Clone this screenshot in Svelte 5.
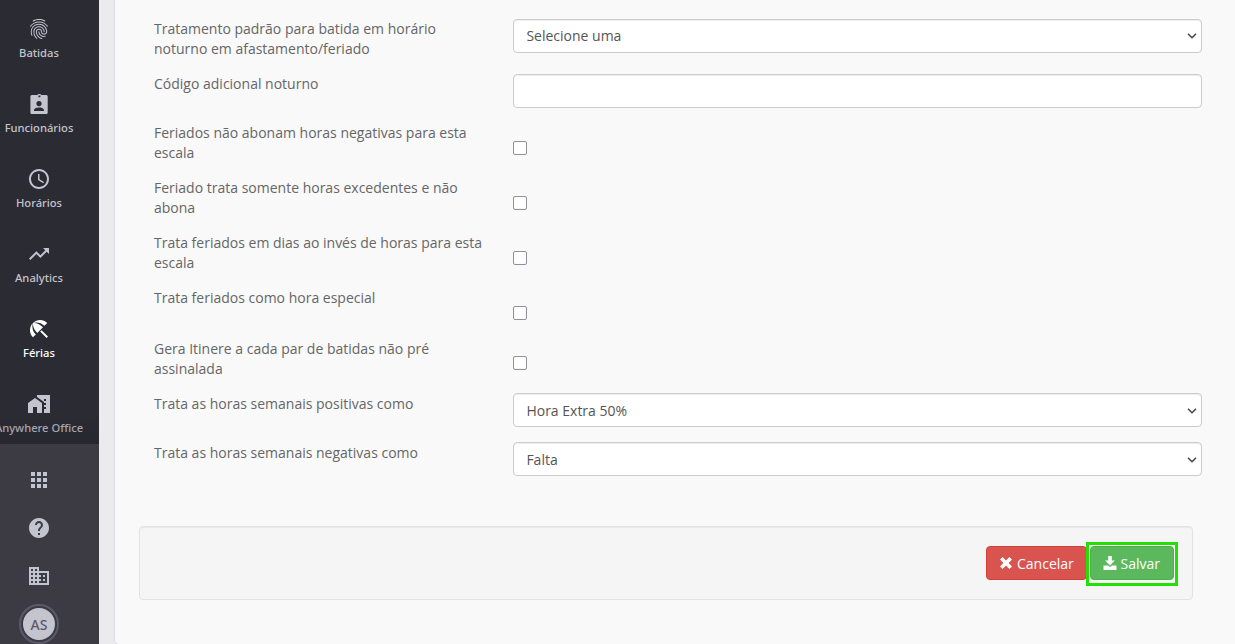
<script>
  const nav = [
    { label: 'Batidas', paths: ['M17.81 4.47c-.08 0-.16-.02-.23-.06C15.66 3.42 14 3 12.01 3c-1.98 0-3.86.47-5.57 1.41-.24.13-.54.04-.68-.2-.13-.24-.04-.55.2-.68C7.82 2.52 9.86 2 12.01 2c2.13 0 3.99.47 6.03 1.52.25.13.34.43.21.67-.09.18-.26.28-.44.28zM3.5 9.72c-.1 0-.2-.03-.29-.09-.23-.16-.28-.47-.12-.7.99-1.4 2.25-2.5 3.75-3.27C9.98 4.04 14 4.03 17.15 5.65c1.5.77 2.76 1.86 3.75 3.25.16.22.11.54-.12.7-.23.16-.54.11-.7-.12-.9-1.26-2.04-2.25-3.39-2.94-2.87-1.47-6.54-1.47-9.4.01-1.36.7-2.5 1.7-3.4 2.96-.08.14-.23.21-.39.21zm6.25 12.07c-.13 0-.26-.05-.35-.15-.87-.87-1.34-1.43-2.01-2.64-.69-1.23-1.05-2.73-1.05-4.34 0-2.97 2.54-5.39 5.66-5.39s5.66 2.42 5.66 5.39c0 .28-.22.5-.5.5s-.5-.22-.5-.5c0-2.42-2.09-4.39-4.66-4.39-2.57 0-4.66 1.97-4.66 4.39 0 1.44.32 2.77.93 3.85.64 1.15 1.08 1.64 1.85 2.42.19.2.19.51 0 .71-.11.1-.24.15-.37.15zm7.17-1.85c-1.19 0-2.24-.3-3.1-.89-1.49-1.01-2.38-2.65-2.38-4.39 0-.28.22-.5.5-.5s.5.22.5.5c0 1.41.72 2.74 1.94 3.56.71.48 1.54.71 2.54.71.24 0 .64-.03 1.04-.1.27-.05.53.13.58.41.05.27-.13.53-.41.58-.57.11-1.07.12-1.21.12zM14.91 22c-.04 0-.09-.01-.13-.02-1.59-.44-2.63-1.03-3.72-2.1-1.4-1.39-2.17-3.24-2.17-5.22 0-1.62 1.38-2.94 3.08-2.94 1.7 0 3.08 1.32 3.08 2.94 0 1.07.93 1.94 2.08 1.94s2.08-.87 2.08-1.94c0-3.77-3.25-6.83-7.25-6.83-2.84 0-5.44 1.58-6.61 4.03-.39.81-.59 1.76-.59 2.8 0 .78.07 2.01.67 3.61.1.26-.03.55-.29.64-.26.1-.55-.04-.64-.29-.49-1.31-.73-2.61-.73-3.96 0-1.2.23-2.29.68-3.24 1.33-2.79 4.28-4.6 7.51-4.6 4.55 0 8.25 3.51 8.25 7.83 0 1.62-1.38 2.94-3.08 2.94s-3.08-1.32-3.08-2.94c0-1.07-.93-1.94-2.08-1.94s-2.08.87-2.08 1.94c0 1.71.66 3.31 1.87 4.51.95.94 1.86 1.46 3.27 1.85.27.07.42.35.35.61-.05.23-.26.38-.47.38z'] },
    { label: 'Funcionários', paths: ['M19 3h-5.6v2.2h-2V3H5C3.9 3 3.4 3.9 3.4 4.6V20.4c0 1 .7 1.6 1.6 1.6h14c1 0 1.7-.6 1.7-1.6V4.6C20.7 3.7 20 3 19 3zm-7 6a2.6 2.6 0 1 1 0 5.2A2.6 2.6 0 0 1 12 9zm5 10H7v-1c0-1.7 3.3-2.5 5-2.5s5 .8 5 2.5v1z', 'M10.8 2h3v1.5h-3z'] },
    { label: 'Horários', paths: ['M11.99 2C6.47 2 2 6.48 2 12s4.47 10 9.99 10C17.52 22 22 17.52 22 12S17.52 2 11.99 2zM12 20c-4.42 0-8-3.58-8-8s3.58-8 8-8 8 3.58 8 8-3.58 8-8 8z', 'M12.5 7H11v6l5.25 3.15.75-1.23-4.5-2.67z'] },
    { label: 'Analytics', paths: ['M16 6l2.29 2.29-4.88 4.88-4-4L2 16.59 3.41 18l6-6 4 4 6.3-6.29L22 12V6z'] },
    { label: 'Férias', active: true, paths: ['M13.127 14.56l1.43-1.43 6.44 6.443L19.57 21zm4.293-5.73l2.86-2.86c-3.95-3.95-10.35-3.96-14.3-.02 3.93-1.3 8.31-.25 11.44 2.88zM5.95 5.98c-3.94 3.95-3.93 10.35.02 14.3l2.86-2.86C5.7 14.29 4.65 9.91 5.95 5.98zm.02-.02l-.01.01c-.38 3.01 1.17 6.88 4.3 10.02l5.73-5.73c-3.13-3.13-7.01-4.68-10.02-4.3z'] },
    { label: 'Anywhere Office', paths: ['M1 11v10h5v-6h4v6h5V11L8 6z', 'M10 3v1.97l7 5V11h2v2h-2v2h2v2h-2v4h6V3H10zm9 6h-2V7h2v2z'] }
  ];
  const tools = [
    'M4 8h4V4H4v4zm6 12h4v-4h-4v4zm-6 0h4v-4H4v4zm0-6h4v-4H4v4zm6 0h4v-4h-4v4zm6-10v4h4V4h-4zm-6 4h4V4h-4v4zm6 6h4v-4h-4v4zm0 6h4v-4h-4v4z',
    'M12 2C6.48 2 2 6.48 2 12s4.48 10 10 10 10-4.48 10-10S17.52 2 12 2zm1 17h-2v-2h2v2zm2.07-7.75l-.9.92C13.45 12.9 13 13.5 13 15h-2v-.5c0-1.1.45-2.1 1.17-2.83l1.24-1.26c.37-.36.59-.86.59-1.41 0-1.1-.9-2-2-2s-2 .9-2 2H8c0-2.21 1.79-4 4-4s4 1.79 4 4c0 .88-.36 1.68-.93 2.25z',
    'M12 7V3H2v18h20V7H12zM6 19H4v-2h2v2zm0-4H4v-2h2v2zm0-4H4V9h2v2zm0-4H4V5h2v2zm4 12H8v-2h2v2zm0-4H8v-2h2v2zm0-4H8V9h2v2zm0-4H8V5h2v2zm10 12h-8v-2h2v-2h-2v-2h2v-2h-2V9h8v10zm-2-8h-2v2h2v-2zm0 4h-2v2h2v-2z'
  ];
  const rows = [
    { label: 'Tratamento padrão para batida em horário noturno em afastamento/feriado', type: 'select', value: 'Selecione uma' },
    { label: 'Código adicional noturno', type: 'text' },
    { label: 'Feriados não abonam horas negativas para esta escala', type: 'check' },
    { label: 'Feriado trata somente horas excedentes e não abona', type: 'check' },
    { label: 'Trata feriados em dias ao invés de horas para esta escala', type: 'check' },
    { label: 'Trata feriados como hora especial', type: 'check' },
    { label: 'Gera Itinere a cada par de batidas não pré assinalada', type: 'check' },
    { label: 'Trata as horas semanais positivas como', type: 'select', value: 'Hora Extra 50%' },
    { label: 'Trata as horas semanais negativas como', type: 'select', value: 'Falta' }
  ];
</script>

<div class="app">
  <aside>
    <nav>
      {#each nav as item}
        <div class="item" class:active={item.active}>
          <svg viewBox="0 0 24 24">{#each item.paths as d}<path {d} />{/each}</svg>
          <span>{item.label}</span>
        </div>
      {/each}
    </nav>
    <div class="tools">
      {#each tools as d}
        <svg viewBox="0 0 24 24"><path {d} /></svg>
      {/each}
      <div class="avatar">AS</div>
    </div>
  </aside>
  <main>
    <form>
      {#each rows as row, i}
        <div class="row" class:late={i > 5}>
          <span class="label">{row.label}</span>
          {#if row.type === 'select'}
            <div class="control">
              <span>{row.value}</span>
              <svg viewBox="0 0 10 6"><path d="M1 .8l4 4 4-4" /></svg>
            </div>
          {:else if row.type === 'text'}
            <input class="control" type="text" aria-label={row.label} />
          {:else}
            <div class="checkcell"><i class="check"></i></div>
          {/if}
        </div>
      {/each}
    </form>
    <div class="well">
      <button class="cancel">
        <svg viewBox="0 0 14 14"><path d="M3.6 1L7 4.4 10.4 1 13 3.6 9.6 7 13 10.4 10.4 13 7 9.6 3.6 13 1 10.4 4.4 7 1 3.6z" /></svg>
        <span>Cancelar</span>
      </button>
      <div class="highlight">
        <button class="save">
          <svg viewBox="0 0 14 14"><path d="M5.2 0h3.6v4.6h3L7 9.6 2.2 4.6h3zM.5 9.5h4.3L7 11l2.2-1.5h4.3V14H.5z" /></svg>
          <span>Salvar</span>
        </button>
      </div>
    </div>
  </main>
</div>

<style>
  :global(body) { overflow: hidden; }
  .app {
    display: flex;
    height: 644px;
    overflow: hidden;
    box-sizing: border-box;
    background: #ebeaef;
    font: 14px/20px "Open Sans", sans-serif;
    color: #666;
  }
  aside {
    width: 99px;
    flex: none;
    background: #3c3b44;
    color: #c4c4ce;
    overflow: hidden;
  }
  nav {
    height: 444px;
    box-sizing: border-box;
    padding-top: 17px;
    width: 99px;
    background: linear-gradient(to bottom, transparent 415px, rgba(37, 36, 45, .55) 444px), #2b2b33;
    overflow: hidden;
  }
  .item {
    width: 78px;
    height: 75px;
    display: flex;
    flex-direction: column;
    align-items: center;
    font: 500 11.2px/16px "Noto Sans", sans-serif;
    white-space: nowrap;
  }
  .item svg, .tools svg { width: 24px; height: 24px; flex: none; fill: currentColor; }
  .item span { margin-top: 4px; }
  .item:last-child span { opacity: .8; }
  .active { color: #fff; }
  .tools {
    width: 78px;
    padding-top: 24px;
    display: flex;
    flex-direction: column;
    align-items: center;
    gap: 24px;
  }
  .avatar {
    width: 32px;
    height: 32px;
    margin-top: -6px;
    border: 2px solid #3c3b44;
    outline: 2px solid #5b596b;
    border-radius: 50%;
    background: #c4c4ce;
    color: #5b596b;
    text-align: center;
    font: 500 14px/34px "Noto Sans", sans-serif;
  }
  main {
    flex: 1;
    margin-left: 16px;
    padding: 19px 33px 0 39px;
    background: #f9f9f9;
    border-bottom-left-radius: 4px;
    box-shadow: 0 0 2px rgba(0, 0, 0, .2);
  }
  .row {
    display: grid;
    grid-template-columns: 359px 1fr;
    align-items: start;
    margin-bottom: 15px;
  }
  .label { padding-right: 28px; }
  .late .label { padding-top: 1px; margin-bottom: -1px; }
  .late .control { padding-top: 1px; }
  .control {
    height: 34px;
    width: 100%;
    box-sizing: border-box;
    border: 1px solid #ccc;
    border-radius: 4px;
    background: #fff;
    box-shadow: inset 0 1px 1px rgba(0, 0, 0, .075);
    padding: 0 4px 0 12.4px;
    display: flex;
    align-items: center;
    justify-content: space-between;
    color: #555;
  }
  .control svg { width: 10px; height: 6px; fill: none; stroke: #444; stroke-width: 1.5; }
  .checkcell { height: 35px; padding-top: 18px; box-sizing: border-box; }
  .check {
    display: block;
    width: 14px;
    height: 14px;
    box-sizing: border-box;
    border: 1px solid #8f8f9d;
    border-radius: 2px;
    background: #fff;
  }
  .well {
    margin: 50px 9px 0 -15px;
    width: 1054px;
    height: 74px;
    box-sizing: border-box;
    padding-right: 14px;
    display: flex;
    justify-content: flex-end;
    align-items: center;
    border: 1px solid #e3e3e3;
    border-radius: 4px;
    background: #f5f5f5;
    box-shadow: inset 0 1px 1px rgba(0, 0, 0, .05);
  }
  button {
    height: 34px;
    box-sizing: border-box;
    display: flex;
    align-items: center;
    gap: 4px;
    padding: 0 12px;
    border: 1px solid;
    border-radius: 4px;
    color: #fff;
    font: 14px/20px "Open Sans", sans-serif;
  }
  button svg { width: 14px; height: 14px; fill: currentColor; }
  button span { padding-top: 2px; }
  .cancel { width: 101px; margin-right: -1px; background: #d9534f; border-color: #d43f3a; }
  .save { width: 84px; padding-left: 11.5px; background: #5cb85c; border-color: #4cae4c; }
  .highlight {
    border: 3px solid #22e000;
    padding: 2px 1px 3px;
    height: 44px;
    margin-top: 1px;
    box-sizing: border-box;
    display: flex;
    align-items: center;
    background: #f5f5f5;
  }
</style>
